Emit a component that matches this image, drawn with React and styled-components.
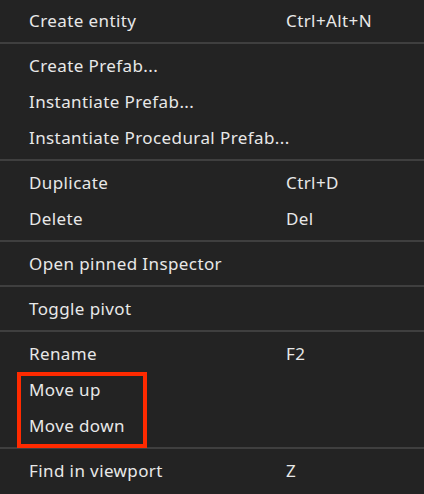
import React from "react";
import styled, { createGlobalStyle } from "styled-components";

const Global = createGlobalStyle`
  html, body {
    margin: 0;
    padding: 0;
    background: #232323;
  }
  body {
    font-family: "Noto Sans", "Open Sans", sans-serif;
  }
`;

const Menu = styled.ul`
  list-style: none;
  margin: 0;
  padding: 0;
  width: 424px;
  height: 494px;
  background: #232323;
  overflow: hidden;
`;

const Section = styled.li`
  padding: 4px 0 3px;
  border-top: 2px solid #3f3f3f;

  &:first-child {
    padding-top: 3px;
    border-top: none;
  }
`;

const Row = styled.div`
  box-sizing: border-box;
  height: 36px;
  display: flex;
  align-items: center;
  padding: 0 0 2px 29px;
  color: #e8e8e8;
  font-size: 17px;
  letter-spacing: 0.4px;
`;

const Label = styled.span`
  width: 257px;
  white-space: nowrap;
  overflow: visible;
`;

const Shortcut = styled.span`
  white-space: nowrap;
`;

const Highlight = styled.div`
  position: relative;

  &::after {
    content: "";
    position: absolute;
    left: 17px;
    top: 0;
    width: 130px;
    bottom: -4px;
    box-sizing: border-box;
    border: 4px solid #ff2a00;
    pointer-events: none;
  }
`;

const sections = [
  [["Create entity", "Ctrl+Alt+N"]],
  [
    ["Create Prefab..."],
    ["Instantiate Prefab..."],
    ["Instantiate Procedural Prefab..."],
  ],
  [
    ["Duplicate", "Ctrl+D"],
    ["Delete", "Del"],
  ],
  [["Open pinned Inspector"]],
  [["Toggle pivot"]],
];

function Item({ label, shortcut }) {
  return (
    <Row>
      <Label>{label}</Label>
      {shortcut && <Shortcut>{shortcut}</Shortcut>}
    </Row>
  );
}

export default function App() {
  return (
    <>
      <Global />
      <Menu>
        {sections.map((items, i) => (
          <Section key={i}>
            {items.map(([label, shortcut]) => (
              <Item key={label} label={label} shortcut={shortcut} />
            ))}
          </Section>
        ))}
        <Section>
          <Item label="Rename" shortcut="F2" />
          <Highlight>
            <Item label="Move up" />
            <Item label="Move down" />
          </Highlight>
        </Section>
        <Section>
          <Item label="Find in viewport" shortcut="Z" />
        </Section>
      </Menu>
    </>
  );
}
